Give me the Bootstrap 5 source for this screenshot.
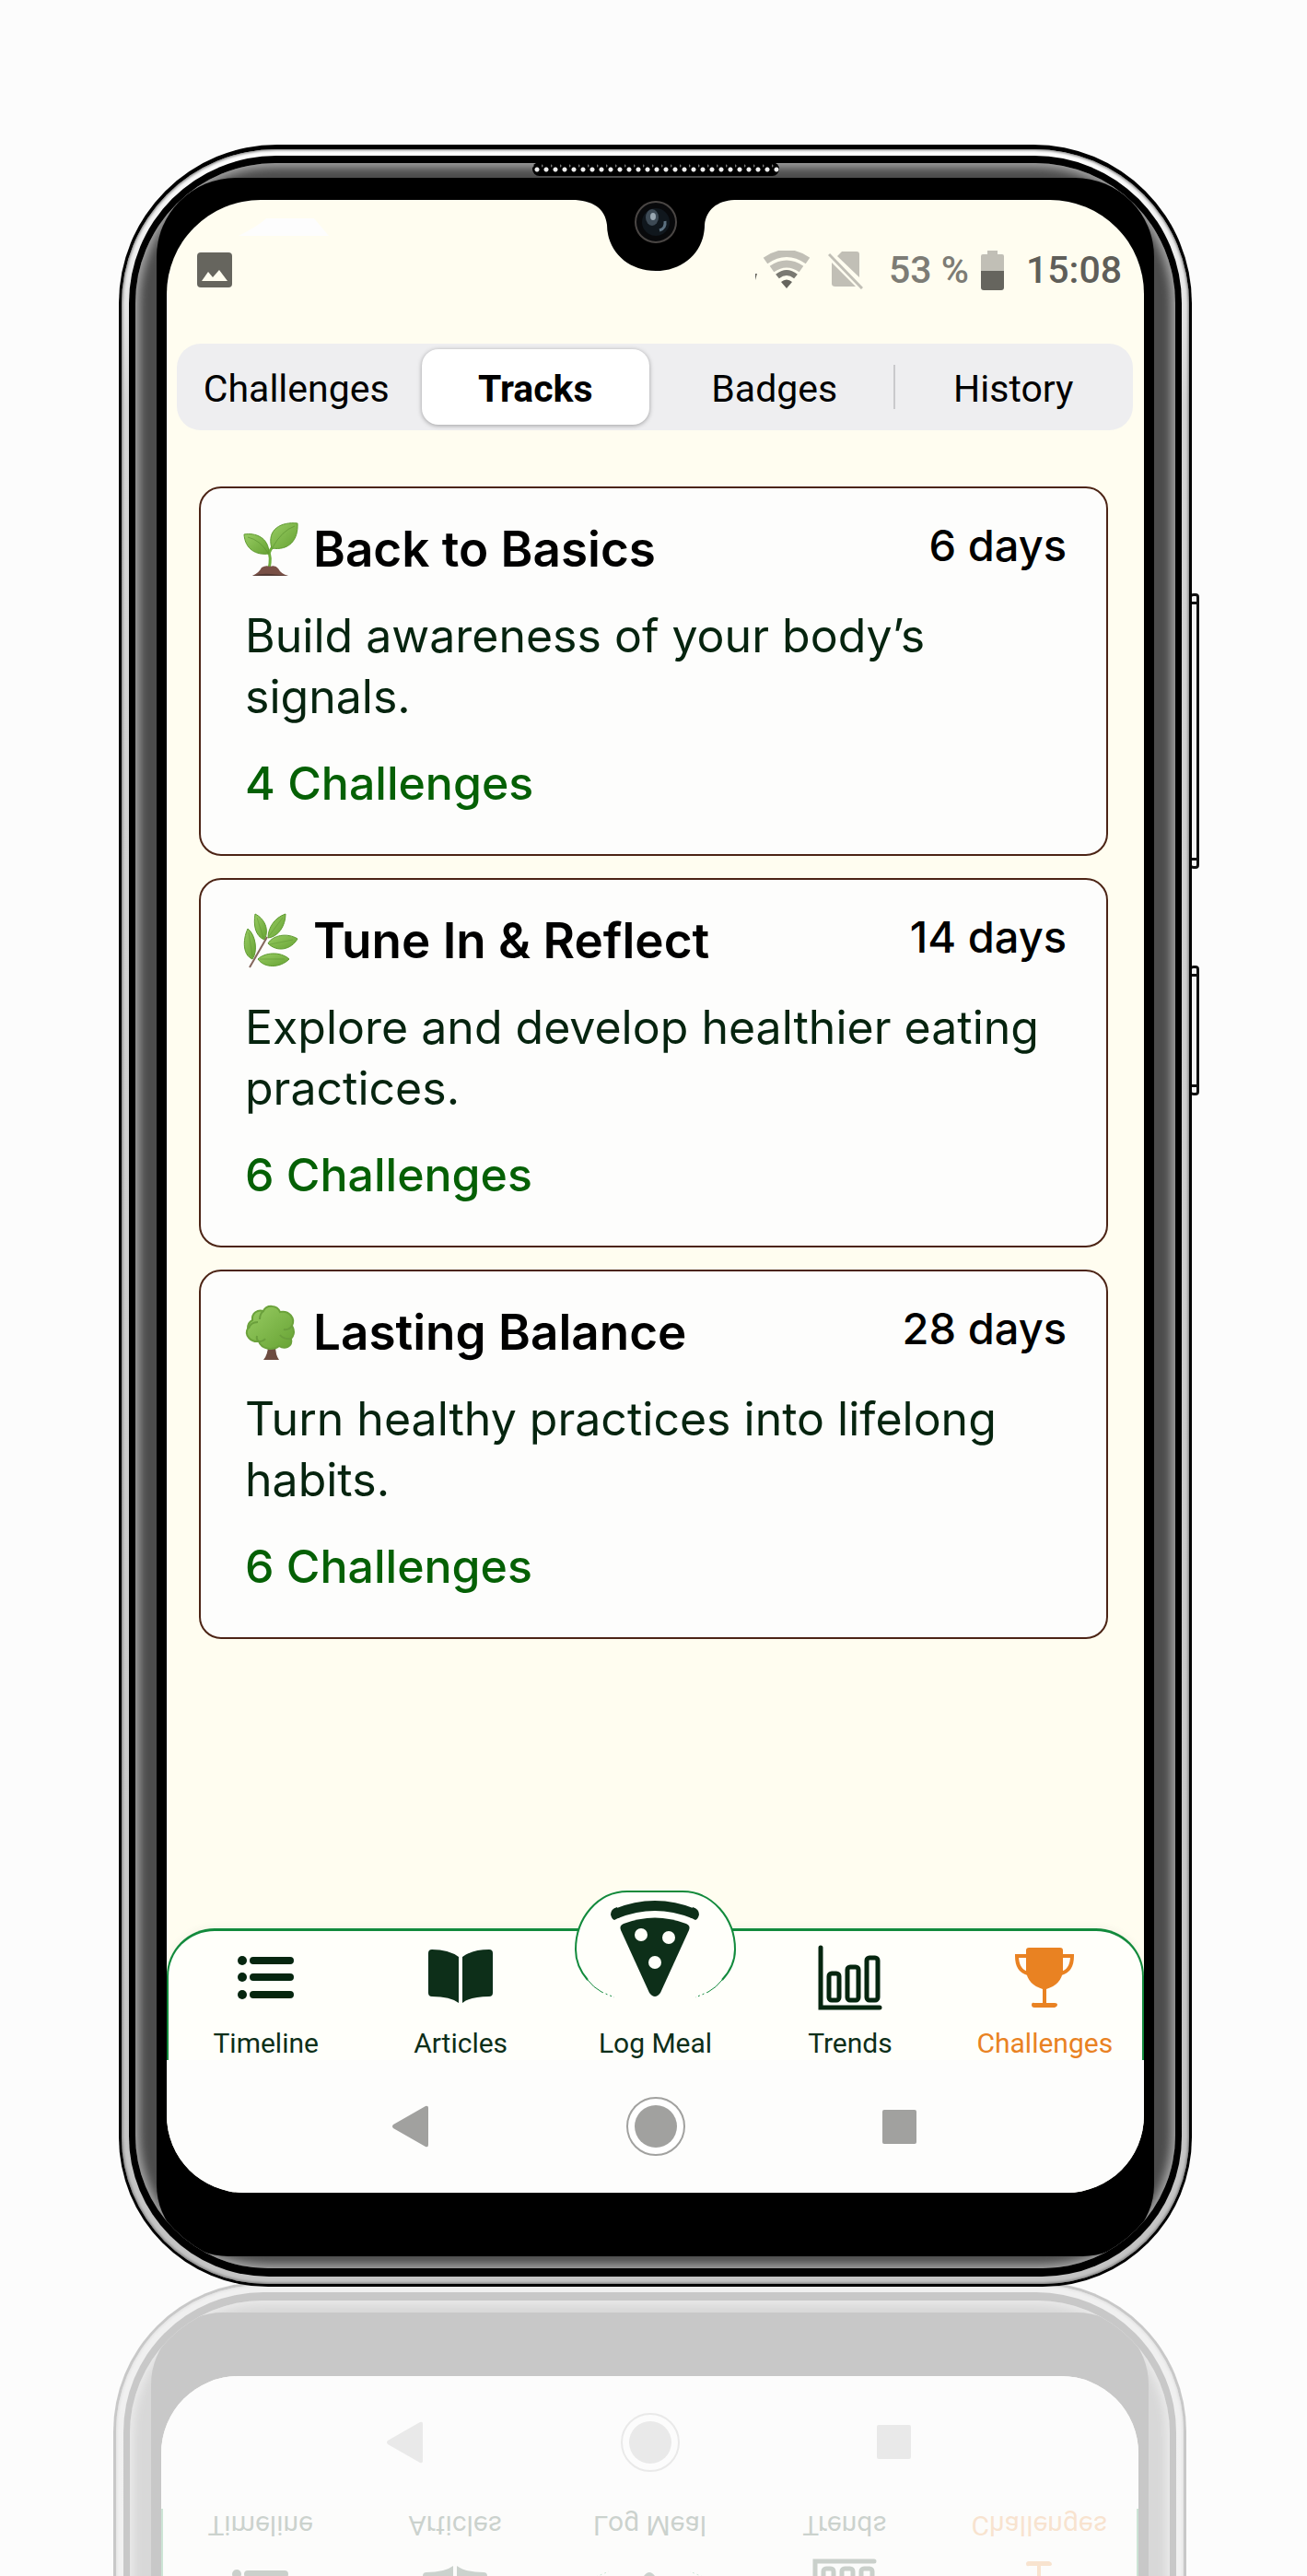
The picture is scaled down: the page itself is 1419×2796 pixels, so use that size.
<!DOCTYPE html>
<html lang="en">
<head>
<meta charset="utf-8">
<meta name="viewport" content="width=device-width, initial-scale=1">
<title>Challenge tracks</title>
<link rel="stylesheet" href="https://cdn.jsdelivr.net/npm/bootstrap@5.3.0/dist/css/bootstrap.min.css">
<style>
  :root { --cream: #fffdf0; --paper: #fdfdfc; --forest: #0d2f19; --line: #128a3c; --orange: #e98222; }
  body { background: #fcfcfc; font-family: Roboto, "Liberation Sans", sans-serif; color: #000; overflow-x: hidden; }
  .stage { padding: 157px 125px 0 129px; }
  .phone { z-index: 1; }

  /* phone shell, from the outer edge inwards */
  .shell-edge { background: #000; border-radius: 172px 172px 162px 162px; padding: 5px 3px 3px; position: relative; }
  .shell-chrome { background: linear-gradient(#fff, #d4d4d4 12%, #c4c4c4); box-shadow: inset 0 0 3px 1px #777; border-radius: 168px 168px 159px 159px; padding: 7px 8px 8px; }
  .shell-groove { background: #000; border-radius: 160px 160px 152px 152px; padding: 8px 7px 9px; }
  .shell-bevel { background: #4c4c4c; box-shadow: inset 0 0 10px 5px #a0a0a0; border-radius: 152px 152px 144px 144px; padding: 16px 23px 13px; overflow: hidden; }
  .shell-face { background: #000; border-radius: 86px 86px 78px 78px; padding: 24px 11px 69px; }
  .speaker { top: 19px; left: 50%; width: 268px; height: 15px; margin-left: -134px; border-radius: 8px; background: radial-gradient(circle at 5px 8px, #eee 2px, transparent 3px) 0 0 / 10px 15px, radial-gradient(circle at 0 4px, #777 1px, transparent 2px) 0 0 / 10px 15px, #000; }
  .side-key { right: -8px; width: 10px; border: 3px solid #111; border-left-width: 2px; border-radius: 4px; background: #f4f4f4; z-index: -1; }
  .key-volume { top: 487px; height: 299px; }
  .key-power { top: 891px; height: 141px; }
  .side-key::before, .side-key::after { content: ""; position: absolute; left: 0; right: 0; height: 3px; background: #111; }
  .side-key::before { top: 6px; }
  .side-key::after { bottom: 6px; }

  .screen { background: var(--cream); border-radius: 102px 102px 84px 84px; min-height: 2163px; overflow: hidden; }
  .notch { top: -1px; left: 50%; margin-left: -91px; }
  .glint { top: 20px; left: 78px; }

  .status-row { height: 156px; padding: 46px 24px 50px 33px; font-size: 41px; line-height: 60px; font-weight: 500; }
  .status-sim { margin-left: 20px; }
  .status-load { color: #7d7c75; margin-left: 28px; margin-right: 13px; }
  .status-clock { color: #5f5e59; margin-left: 24px; }

  .segments { margin: 0 12px 0 11px; padding: 6px 0; background: #eeeef0; border-radius: 26px; }
  .segments button { flex: 0 0 25%; height: 82px; border: 0; padding: 4px 0 0; background: none; font-size: 41px; line-height: 48px; color: #000; }
  .segments .is-on { flex-basis: calc(25% - 12px); margin: 0 6px; background: #fff; font-weight: 700; border-radius: 18px; box-shadow: 0 1px 5px rgba(0,0,0,.35); }
  .segments .rule { width: 2px; height: 48px; margin: 0 -1px; background: #c9c9cc; }

  .tracks { font-family: Inter, "Liberation Sans", sans-serif; margin: 61px 39px 0 35px; gap: 24px; }
  .track { background: var(--paper); border: 2px solid #4c2415; border-radius: 24px; padding: 34px 43px 47px 46px; }
  .track h2 { font-size: 53px; line-height: 64px; font-weight: 600; margin: 0; gap: 16px; }
  .track .span-days { font-size: 47px; line-height: 56px; font-weight: 500; }
  .track .about { font-size: 50px; line-height: 66px; color: #06240f; margin: 29px -20px 0 2px; }
  .track .tally { font-size: 50px; line-height: 60px; font-weight: 500; color: #056005; margin: 31px 0 0 2px; text-decoration: none; display: block; }

  .tabs { background: #fffffa; border: 3px solid var(--line); border-width: 3px 2px 0; border-radius: 52px 52px 0 0; box-shadow: 0 -2px 8px rgba(0,0,0,.04); }
  .tabs a { flex: 1 1 0; padding-top: 14px; color: var(--forest); text-decoration: none; font-size: 30px; line-height: 36px; }
  .tabs .glyph { height: 72px; margin-bottom: 18px; }
  .tabs a.is-here { color: var(--orange); }
  .hump { top: -46px; left: 50%; margin-left: -91px; }

  .sys-keys { background: var(--paper); height: 144px; padding: 0 247px 0 243px; }
  .sys-keys button { border: 0; background: none; padding: 0; line-height: 0; }

  .mirror { height: 319px; margin: -5px 6px 0 -6px; overflow: hidden; opacity: .2; }
  .mirror .phone { transform: scaleY(-1); }
</style>
</head>
<body>
<main class="stage">
  <div class="phone position-relative" id="phone">
    <span class="side-key key-volume position-absolute"></span>
    <span class="side-key key-power position-absolute"></span>
    <div class="shell-edge"><div class="shell-chrome"><div class="shell-groove"><div class="shell-bevel"><div class="shell-face">
      <div class="speaker position-absolute"></div>
      <div class="screen position-relative d-flex flex-column">

        <svg class="notch position-absolute" width="182" height="79" viewBox="0 0 182 79" aria-hidden="true">
          <path d="M0 0H182V1C160 0 146 10 144 28C144 56 122 78 91 78C60 78 38 56 38 28C36 10 22 1 0 1Z"/>
          <circle cx="91" cy="25" r="22" fill="#08090b" stroke="#4a4644" stroke-width="2"/>
          <circle cx="91" cy="25" r="15" fill="#10171d"/>
          <ellipse cx="87" cy="20" rx="7" ry="9" fill="#3d4a55"/>
          <ellipse cx="88" cy="19" rx="3" ry="4" fill="#9aa8b2"/>
          <path d="M95 34Q102 32 101 24" stroke="#5c7180" stroke-width="3" fill="none"/>
        </svg>
        <svg class="glint position-absolute" width="98" height="19" viewBox="0 0 98 19" aria-hidden="true"><path d="M0 19Q22 8 30 0H82L98 19Z" fill="#fdfdfd"/></svg>

        <header class="status-row d-flex align-items-center">
          <svg width="38" height="38" viewBox="0 0 38 38" aria-label="Picture saved" role="img"><rect width="38" height="38" rx="4" fill="#66655e"/><path d="M5 31L12 21L17 27L24 19L33 31Z" fill="#fffdf0"/></svg>
          <svg class="ms-auto" width="61" height="42" viewBox="-11 0 61 42" aria-label="Wi-Fi" role="img">
            <path d="M-9 25h2l-2 7z" fill="#66655e"/>
            <g fill="none" stroke="#c1bfb6" stroke-width="8"><path d="M2 11Q25-5 48 11"/><path d="M9 20Q25 9 41 20"/></g>
            <path d="M15 28Q25 20 35 28" fill="none" stroke="#7a7972" stroke-width="6"/>
            <path d="M19 34Q25 29 31 34L25 41Z" fill="#66655e"/>
          </svg>
          <svg class="status-sim" width="38" height="42" viewBox="0 0 38 42" aria-label="No SIM" role="img"><path d="M10 6L15 1H31Q34 1 34 4V29ZM4 13L30 39H8Q4 39 4 36Z" fill="#c1bfb6"/><path d="M1 4L37 41" stroke="#c1bfb6" stroke-width="3"/></svg>
          <span class="status-load">53 %</span>
          <svg width="25" height="43" viewBox="0 0 25 43" aria-label="Battery" role="img"><path d="M7 0H18V4H23Q25 4 25 6V22H0V6Q0 4 2 4H7Z" fill="#c1bfb6"/><path d="M0 22H25V40Q25 43 22 43H3Q0 43 0 40Z" fill="#66655e"/></svg>
          <span class="status-clock">15:08</span>
        </header>

        <div class="segments d-flex align-items-center" role="group" aria-label="Sections">
          <button type="button">Challenges</button>
          <button type="button" class="is-on" aria-pressed="true">Tracks</button>
          <button type="button">Badges</button>
          <span class="rule"></span>
          <button type="button">History</button>
        </div>

        <section class="tracks d-flex flex-column">
          <article class="track">
            <div class="d-flex align-items-start justify-content-between">
              <h2 class="d-flex align-items-center">
                <svg width="60" height="60" viewBox="0 0 60 60" aria-hidden="true">
                  <defs><linearGradient id="leafA" x1="0" y1="0" x2="1" y2="1"><stop offset="0" stop-color="#98cc63"/><stop offset="1" stop-color="#67a334"/></linearGradient></defs>
                  <path d="M28 52Q31 38 27 31M28 36Q29 30 33 27" stroke="#6fae3d" stroke-width="3" fill="none"/>
                  <path d="M1 14C13 12 28 17 28 35C14 37 2 30 1 14Z" fill="url(#leafA)" stroke="#5f9a30"/>
                  <path d="M59 2C42 0 25 8 31 29C50 32 60 20 59 2Z" fill="url(#leafA)" stroke="#5f9a30"/>
                  <path d="M5 17Q18 20 27 34M56 5Q42 10 32 28" stroke="#578d2d" stroke-opacity=".6" fill="none"/>
                  <path d="M10 59Q18 55 20 50Q25 47 29 49Q35 47 38 51Q41 57 49 59Z" fill="#795046"/><path d="M10 59Q20 56 30 57T49 59Z" fill="#533a34"/>
                </svg>Back to Basics</h2>
              <span class="span-days">6 days</span>
            </div>
            <p class="about">Build awareness of your body’s<br>signals.</p>
            <a class="tally" href="#basics">4 Challenges</a>
          </article>

          <article class="track">
            <div class="d-flex align-items-start justify-content-between">
              <h2 class="d-flex align-items-center">
                <svg width="60" height="60" viewBox="0 0 60 60" aria-hidden="true">
                  <g fill="url(#leafA)" stroke="#5f9a30">
                    <path d="M13 1C23 6 29 18 23 29C13 25 11 13 13 1Z"/><path d="M46 1C34 5 27 16 27 27C38 26 46 14 46 1Z"/>
                    <path d="M5 17C14 24 16 42 10 50C0 46-1 30 5 17Z"/><path d="M59 28C48 21 32 24 27 33C37 43 52 40 59 28Z"/>
                    <path d="M50 50C40 41 23 43 16 50C23 60 40 60 50 50Z"/>
                  </g>
                  <path d="M15 5L22 27M43 5L28 25M6 21L10 47M54 29L29 34M45 50L18 50" stroke="#578d2d" opacity=".4"/>
                  <path d="M7 59L26 26" stroke="#84665c" stroke-width="2"/>
                </svg>Tune In &amp; Reflect</h2>
              <span class="span-days">14 days</span>
            </div>
            <p class="about">Explore and develop healthier eating<br>practices.</p>
            <a class="tally" href="#reflect">6 Challenges</a>
          </article>

          <article class="track">
            <div class="d-flex align-items-start justify-content-between">
              <h2 class="d-flex align-items-center">
                <svg width="60" height="60" viewBox="0 0 60 60" aria-hidden="true">
                  <path d="M27 44H35Q35 55 39 60H22Q27 54 27 44Z" fill="#6d4c41"/>
                  <path d="M22 7C25 0 37 0 40 8C50 6 57 15 53 23C57 30 54 35 52 37C54 46 45 49 39 45C33 50 20 49 17 40C8 41 1 33 5 26C5 20 8 18 10 17C9 9 16 5 22 7Z" fill="url(#leafA)" stroke="#6ba23b" stroke-width="2"/>
                  <path d="M22 7Q18 10 18 16M6 26Q8 19 16 19M53 23Q50 28 44 27M52 37Q44 38 40 33M17 40Q14 38 15 34M17 40Q22 40 24 37" stroke="#6a9f3c" stroke-width="2" fill="none"/>
                </svg>Lasting Balance</h2>
              <span class="span-days">28 days</span>
            </div>
            <p class="about">Turn healthy practices into lifelong<br>habits.</p>
            <a class="tally" href="#balance">6 Challenges</a>
          </article>
        </section>

        <nav class="tabs d-flex text-center mt-auto" aria-label="Main">
          <a href="#timeline">
            <svg class="glyph d-block mx-auto" width="72" viewBox="0 0 72 72" aria-hidden="true"><g stroke="#06260f" stroke-width="8" stroke-linecap="round"><path d="M22 18H62M22 36H62M22 55H62"/></g><g fill="#06260f"><circle cx="10" cy="18" r="5"/><circle cx="10" cy="36" r="5"/><circle cx="10" cy="55" r="5"/></g></svg>
            Timeline</a>
          <a href="#articles">
            <svg class="glyph d-block mx-auto" width="72" viewBox="0 0 72 72" aria-hidden="true"><path fill="#0d2f19" d="M5 6Q23 6 34 14V64Q25 57 5 57Q1 57 1 53V10Q1 6 5 6ZM67 6Q49 6 38 14V64Q47 57 67 57Q71 57 71 53V10Q71 6 67 6Z"/></svg>
            Articles</a>
          <a href="#log" class="position-relative">
            <svg class="hump position-absolute" width="180" height="124" viewBox="0 0 180 124" aria-hidden="true">
              <path fill="#fffffa" d="M46 118C20 110 4 92 4 66C4 32 28 3 60 3H120C152 3 177 32 177 66C177 92 160 110 134 118Z"/>
              <path fill="none" stroke="#128a3c" stroke-width="2" d="M17 99Q4 84 4 66C4 32 28 3 60 3H120C152 3 177 32 177 66Q177 84 163 99"/>
              <path fill="none" stroke="#128a3c" stroke-width="1" d="M17 99Q23 107 32 112M163 99Q157 107 148 112"/>
              <path fill="none" stroke="#128a3c" stroke-width="1" stroke-dasharray="2 3" d="M32 112L46 118M148 112L134 118"/>
              <path fill="none" stroke="#0d2f19" stroke-width="11" stroke-linejoin="round" d="M48 27Q90 10 132 27"/>
              <path fill="#0d2f19" d="M42 28Q42 22 49 20L52 31L46 34Q43 33 42 28ZM138 28Q138 22 131 20L128 31L134 34Q137 33 138 28Z"/>
              <path fill="#0d2f19" d="M56 38Q90 25 124 38Q129 40 127 45L96 113Q90 121 84 113L53 45Q51 40 56 38Z"/>
              <g fill="#fffffa"><circle cx="75" cy="50" r="7"/><circle cx="105" cy="53" r="7"/><circle cx="90" cy="80" r="7"/></g>
            </svg>
            <span class="glyph d-block"></span>
            Log Meal</a>
          <a href="#trends">
            <svg class="glyph d-block mx-auto" width="72" viewBox="0 0 72 72" aria-hidden="true"><g fill="none" stroke="#06260f" stroke-width="5" stroke-linecap="round"><path d="M4 4V69H68"/><rect x="13" y="32" width="11" height="29" rx="3"/><rect x="33" y="25" width="12" height="36" rx="3"/><rect x="54" y="15" width="12" height="46" rx="3"/></g></svg>
            Trends</a>
          <a href="#challenges" class="is-here" aria-current="page">
            <svg class="glyph d-block mx-auto" width="72" viewBox="0 0 72 72" aria-hidden="true"><path fill="#e98222" d="M19 4H53Q56 4 56 7V30Q54 44 38 49V64H47Q50 64 50 66T47 69H25Q22 69 22 66T25 64H34V49Q18 44 16 30V7Q16 4 19 4Z"/><path fill="none" stroke="#e98222" stroke-width="4" d="M16 13H6Q6 29 18 32M56 13H66Q66 29 54 32"/></svg>
            Challenges</a>
        </nav>
        <div class="sys-keys d-flex align-items-center justify-content-between">
          <button type="button" aria-label="Back"><svg width="42" height="46" viewBox="0 0 42 46"><path d="M38 1Q41 0 41 3V43Q41 46 38 45L3 25Q1 23 3 21Z" fill="#a1a19f"/></svg></button>
          <button type="button" aria-label="Home"><svg width="66" height="66" viewBox="0 0 66 66"><circle cx="33" cy="33" r="31" fill="#fff" stroke="#a1a19f" stroke-width="2"/><circle cx="33" cy="33" r="23" fill="#a1a19f"/></svg></button>
          <button type="button" aria-label="Recent apps"><svg width="37" height="37" viewBox="0 0 37 37"><rect width="37" height="37" rx="2" fill="#a1a19f"/></svg></button>
        </div>
      </div>
    </div></div></div></div></div>
  </div>
  <div class="mirror" id="mirror" aria-hidden="true"></div>
</main>
<script src="https://cdn.jsdelivr.net/npm/bootstrap@5.3.0/dist/js/bootstrap.bundle.min.js"></script>
<script>
  // The table-top reflection is a flipped copy of the phone; only its lower
  // end shows, so the upper content is left out of the copy.
  const copy = document.getElementById('phone').cloneNode(true);
  copy.removeAttribute('id');
  copy.inert = true;
  copy.querySelectorAll('.status-row, .segments, .tracks, .side-key').forEach(el => el.remove());
  document.getElementById('mirror').appendChild(copy);
</script>
</body>
</html>
